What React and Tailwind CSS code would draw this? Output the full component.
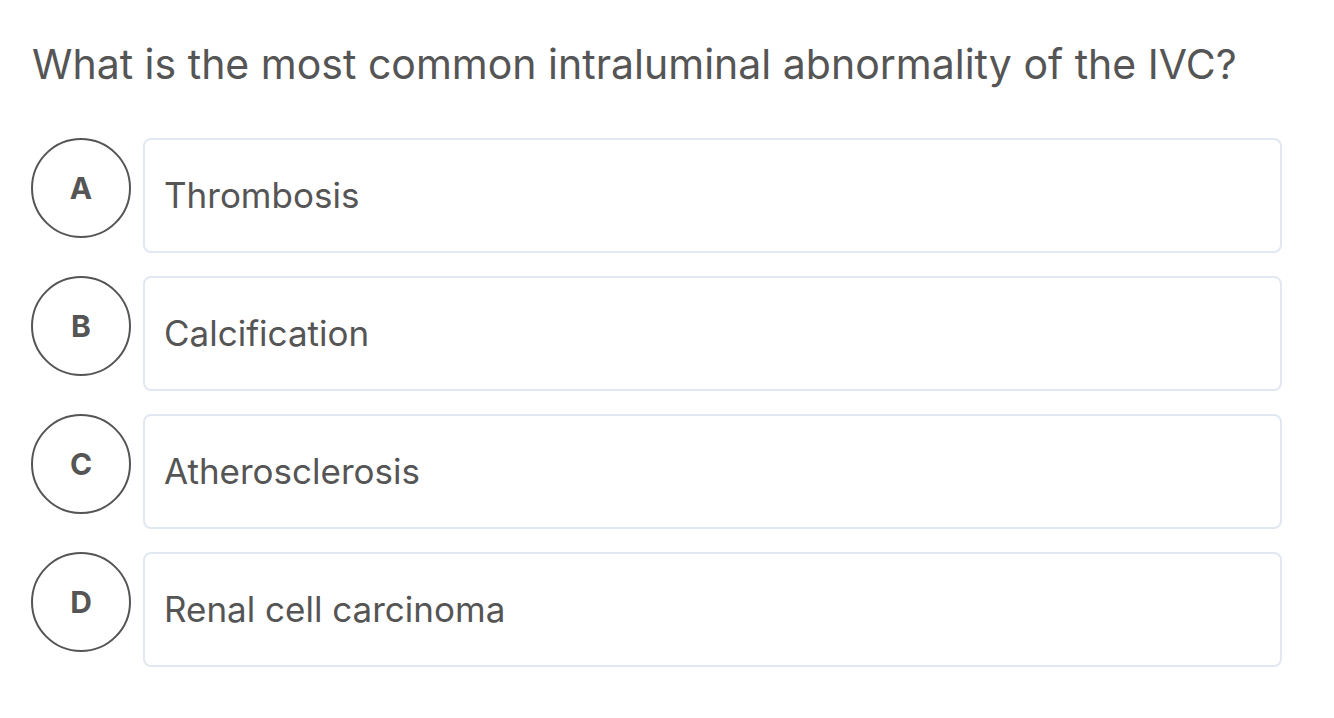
export default function App() {
  const opts = [
    ["A", "Thrombosis"],
    ["B", "Calcification"],
    ["C", "Atherosclerosis"],
    ["D", "Renal cell carcinoma"],
  ];
  return (
    <div className="w-[1334px] h-[718px] bg-white pl-[31px] pr-[52px] pt-[38px]" style={{ fontFamily: "Inter, 'Noto Sans', sans-serif" }}>
      <h1 className="text-[41px] leading-[52px] text-[#555555] font-normal pl-[1px]">
        What is the most common intraluminal abnormality of the IVC?
      </h1>
      <div className="mt-[48px] flex flex-col gap-[23px]">
        {opts.map(([l, t]) => (
          <div key={l} className="flex items-start gap-[12px]">
            <div className="w-[100px] h-[100px] shrink-0 rounded-full border-2 border-[#555555] flex items-center justify-center text-[30px] font-bold text-[#555555]">
              {l}
            </div>
            <div className="flex-1 h-[115px] rounded-[8px] border-2 border-[#e1e8f1] flex items-center pl-[19px] text-[35px] text-[#555555]">
              {t}
            </div>
          </div>
        ))}
      </div>
    </div>
  );
}
